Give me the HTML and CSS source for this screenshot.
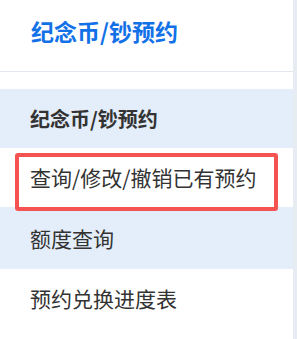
FILE: index.html
```html
<!DOCTYPE html>
<html lang="zh-CN">
<head>
    <meta charset="UTF-8">
    <meta name="viewport" content="width=device-width, initial-scale=1.0">
    <title>纪念币/钞预约</title>
    <link rel="stylesheet" href="styles.css">
</head>
<body>

<div id="sidebar">
    <div class="side-title">纪念币/钞预约</div>
    <ul class="menu">
        <li class="menu-item group">纪念币/钞预约</li>
        <li class="menu-item marked">查询/修改/撤销已有预约</li>
        <li class="menu-item shaded">额度查询</li>
        <li class="menu-item">预约兑换进度表</li>
    </ul>
</div>

</body>
</html>
```

FILE: styles.css
```css
body {
    font-family: "Noto Sans CJK SC", "Liberation Sans", sans-serif;
    background-color: #e7ecf3;
    margin: 0;
    padding: 0;
}
#sidebar {
    width: 293px;
    height: 100vh;
    background-color: #fff;
}
.side-title {
    height: 72px;
    box-sizing: border-box;
    padding: 16px 0 0 31px;
    font-size: 23px;
    line-height: 30px;
    font-weight: bold;
    color: #1371e8;
    border-bottom: 1px solid #e3e7ee;
}
.menu {
    list-style: none;
    margin: 0;
    padding: 17px 0 0 0;
}
.menu-item {
    position: relative;
    height: 59px;
    line-height: 59px;
    padding-left: 30px;
    font-size: 21px;
    color: #333;
}
.menu-item.group {
    background-color: #e4eefa;
    font-size: 20px;
    font-weight: bold;
}
.menu-item.shaded {
    background-color: #e4eefa;
    height: 62px;
    line-height: 62px;
}
/* 红框标注 */
.menu-item.marked::after {
    content: "";
    position: absolute;
    left: 15px;
    top: 5px;
    width: 263px;
    height: 58px;
    box-sizing: border-box;
    border: 4px solid #f55252;
    border-radius: 3px;
    z-index: 1;
}
```
